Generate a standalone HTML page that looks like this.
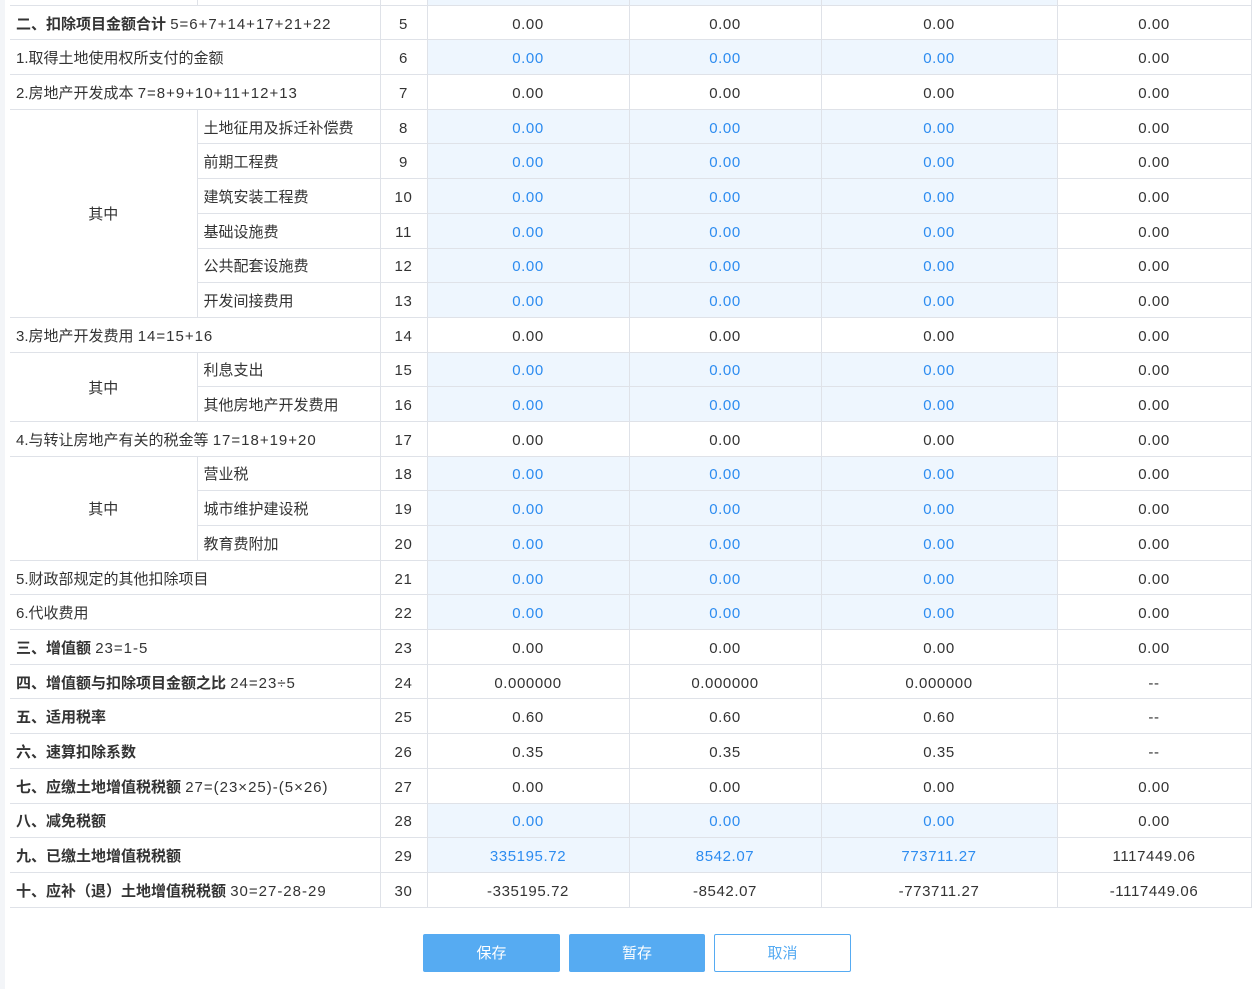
<!DOCTYPE html>
<html><head><meta charset="utf-8"><style>
body{margin:0;width:1254px;height:989px;overflow:hidden;background:#fff;font-family:"Liberation Sans","Noto Sans CJK SC",sans-serif;font-size:15px;color:#333;position:relative}
.strip{position:absolute;left:0;top:0;width:5px;height:989px;background:#f3f5f8}
table{position:absolute;left:10px;top:-30px;border-collapse:collapse;table-layout:fixed;width:1241px}
tr{height:34.7px}
td{border:1px solid #dfe2e8;height:33.7px;padding:4px 0 0 0;line-height:18px;text-align:center;white-space:nowrap;letter-spacing:.6px;box-sizing:border-box;overflow:hidden}
td.l{text-align:left;padding-left:6px;letter-spacing:0}
td.b{background:#eef6fe;color:#2d8cf0}
td.z{letter-spacing:0}
i{font-style:normal;letter-spacing:1px}
b{font-weight:bold;letter-spacing:0}
tr td:first-child{border-left:none}
.btn{position:absolute;top:934px;height:38px;box-sizing:border-box;border-radius:2px;font-size:15px;line-height:40px;text-align:center;color:#fff;background:#56abf2}
</style></head><body>
<div class="strip"></div>
<table>
<colgroup><col style="width:187px"><col style="width:183px"><col style="width:47px"><col style="width:202px"><col style="width:192px"><col style="width:236px"><col style="width:194px"></colgroup>
<tr><td style="border-left:none"></td><td></td><td></td><td class="b"></td><td class="b"></td><td class="b"></td><td></td></tr>
<tr><td class="l" colspan="2"><b>二、扣除项目金额合计</b> <i>5=6+7+14+17+21+22</i></td><td>5</td><td>0.00</td><td>0.00</td><td>0.00</td><td>0.00</td></tr>
<tr><td class="l" colspan="2">1.取得土地使用权所支付的金额</td><td>6</td><td class="b">0.00</td><td class="b">0.00</td><td class="b">0.00</td><td>0.00</td></tr>
<tr><td class="l" colspan="2">2.房地产开发成本 <i>7=8+9+10+11+12+13</i></td><td>7</td><td>0.00</td><td>0.00</td><td>0.00</td><td>0.00</td></tr>
<tr><td rowspan="6" class="z">其中</td><td class="l">土地征用及拆迁补偿费</td><td>8</td><td class="b">0.00</td><td class="b">0.00</td><td class="b">0.00</td><td>0.00</td></tr>
<tr><td class="l">前期工程费</td><td>9</td><td class="b">0.00</td><td class="b">0.00</td><td class="b">0.00</td><td>0.00</td></tr>
<tr><td class="l">建筑安装工程费</td><td>10</td><td class="b">0.00</td><td class="b">0.00</td><td class="b">0.00</td><td>0.00</td></tr>
<tr><td class="l">基础设施费</td><td>11</td><td class="b">0.00</td><td class="b">0.00</td><td class="b">0.00</td><td>0.00</td></tr>
<tr><td class="l">公共配套设施费</td><td>12</td><td class="b">0.00</td><td class="b">0.00</td><td class="b">0.00</td><td>0.00</td></tr>
<tr><td class="l">开发间接费用</td><td>13</td><td class="b">0.00</td><td class="b">0.00</td><td class="b">0.00</td><td>0.00</td></tr>
<tr><td class="l" colspan="2">3.房地产开发费用 <i>14=15+16</i></td><td>14</td><td>0.00</td><td>0.00</td><td>0.00</td><td>0.00</td></tr>
<tr><td rowspan="2" class="z">其中</td><td class="l">利息支出</td><td>15</td><td class="b">0.00</td><td class="b">0.00</td><td class="b">0.00</td><td>0.00</td></tr>
<tr><td class="l">其他房地产开发费用</td><td>16</td><td class="b">0.00</td><td class="b">0.00</td><td class="b">0.00</td><td>0.00</td></tr>
<tr><td class="l" colspan="2">4.与转让房地产有关的税金等 <i>17=18+19+20</i></td><td>17</td><td>0.00</td><td>0.00</td><td>0.00</td><td>0.00</td></tr>
<tr><td rowspan="3" class="z">其中</td><td class="l">营业税</td><td>18</td><td class="b">0.00</td><td class="b">0.00</td><td class="b">0.00</td><td>0.00</td></tr>
<tr><td class="l">城市维护建设税</td><td>19</td><td class="b">0.00</td><td class="b">0.00</td><td class="b">0.00</td><td>0.00</td></tr>
<tr><td class="l">教育费附加</td><td>20</td><td class="b">0.00</td><td class="b">0.00</td><td class="b">0.00</td><td>0.00</td></tr>
<tr><td class="l" colspan="2">5.财政部规定的其他扣除项目</td><td>21</td><td class="b">0.00</td><td class="b">0.00</td><td class="b">0.00</td><td>0.00</td></tr>
<tr><td class="l" colspan="2">6.代收费用</td><td>22</td><td class="b">0.00</td><td class="b">0.00</td><td class="b">0.00</td><td>0.00</td></tr>
<tr><td class="l" colspan="2"><b>三、增值额</b> <i>23=1-5</i></td><td>23</td><td>0.00</td><td>0.00</td><td>0.00</td><td>0.00</td></tr>
<tr><td class="l" colspan="2"><b>四、增值额与扣除项目金额之比</b> <i>24=23÷5</i></td><td>24</td><td>0.000000</td><td>0.000000</td><td>0.000000</td><td>--</td></tr>
<tr><td class="l" colspan="2"><b>五、适用税率</b></td><td>25</td><td>0.60</td><td>0.60</td><td>0.60</td><td>--</td></tr>
<tr><td class="l" colspan="2"><b>六、速算扣除系数</b></td><td>26</td><td>0.35</td><td>0.35</td><td>0.35</td><td>--</td></tr>
<tr><td class="l" colspan="2"><b>七、应缴土地增值税税额</b> <i>27=(23×25)-(5×26)</i></td><td>27</td><td>0.00</td><td>0.00</td><td>0.00</td><td>0.00</td></tr>
<tr><td class="l" colspan="2"><b>八、减免税额</b></td><td>28</td><td class="b">0.00</td><td class="b">0.00</td><td class="b">0.00</td><td>0.00</td></tr>
<tr><td class="l" colspan="2"><b>九、已缴土地增值税税额</b></td><td>29</td><td class="b">335195.72</td><td class="b">8542.07</td><td class="b">773711.27</td><td>1117449.06</td></tr>
<tr><td class="l" colspan="2"><b>十、应补（退）土地增值税税额</b> <i>30=27-28-29</i></td><td>30</td><td>-335195.72</td><td>-8542.07</td><td>-773711.27</td><td>-1117449.06</td></tr>
</table>
<div class="btn" style="left:423px;width:137px">保存</div>
<div class="btn" style="left:569px;width:136px">暂存</div>
<div class="btn" style="left:714px;width:137px;background:#fff;border:1px solid #56abf2;color:#56abf2;line-height:38px">取消</div>
</body></html>
